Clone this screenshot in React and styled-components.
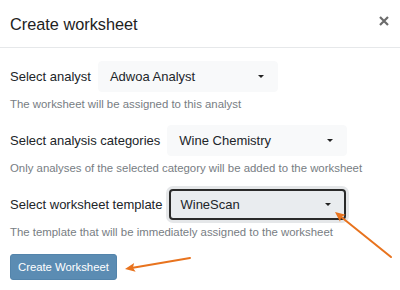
import React from 'react';
import styled, {createGlobalStyle} from 'styled-components';

const GlobalStyle = createGlobalStyle`
	html, body {
		margin: 0;
		padding: 0;
		background: #ffffff;
	}
	body {
		font-family: "Liberation Sans", Arial, Helvetica, sans-serif;
		color: #212529;
	}
`

const Modal = styled.div`
	position: relative;
	width: 400px;
	height: 290px;
	background: #ffffff;
	overflow: hidden;
`

const Header = styled.div`
	display: flex;
	align-items: center;
	justify-content: space-between;
	height: 47px;
	padding: 0 9px 0 10px;
	border-bottom: 1px solid #e6e8ea;
`

const Title = styled.h5`
	margin: 0;
	font-size: 16.3px;
	font-weight: 400;
	color: #222;
	line-height: 1;
	padding-top: 1px;
`

const CloseButton = styled.button`
	display: flex;
	align-items: center;
	justify-content: center;
	width: 14px;
	height: 14px;
	padding: 0;
	border: none;
	background: none;
	color: #6b6b6b;
	cursor: pointer;
	margin-top: -5px;
`

const Body = styled.div`
	padding: 13px 10px 0;
`

const Field = styled.div`
	margin-bottom: ${props => props.last ? '15px' : '14px'};
`

const Row = styled.div`
	display: flex;
	align-items: center;
	gap: 7px;
`

const Label = styled.label`
	font-size: 13px;
	color: #212529;
	white-space: nowrap;
`

const Select = styled.div`
	box-sizing: border-box;
	display: flex;
	align-items: center;
	justify-content: space-between;
	width: ${props => props.focused ? '177px' : '180px'};
	height: 31px;
	padding: 0 13px 0 ${props => props.focused ? '9px' : '11px'};
	border-radius: 4px;
	font-size: 13px;
	color: #212529;
	background: ${props => props.focused ? '#e9ecef' : '#f8f9fa'};
	border: ${props => props.focused ? '2px solid #2a2a2a' : '1px solid #f8f9fa'};
	box-shadow: ${props => props.focused ? '0 0 0 3px #e5e7e9' : 'none'};
	cursor: pointer;
`

const Caret = styled.span`
	width: 0;
	height: 0;
	border-left: 3.5px solid transparent;
	border-right: 3.5px solid transparent;
	border-top: 3.5px solid #222;
`

const Help = styled.div`
	margin-top: 5px;
	font-size: 11.4px;
	line-height: 14px;
	color: #777d83;
`

const SubmitButton = styled.button`
	box-sizing: border-box;
	height: 26px;
	padding: 0 7px;
	font-family: inherit;
	font-size: 11.3px;
	color: #ffffff;
	background: #5b8cb3;
	border: 1px solid #5384ab;
	border-radius: 3px;
	cursor: pointer;
`

const Annotations = styled.svg`
	position: absolute;
	left: 0;
	top: 0;
	pointer-events: none;
`

const fields = [
	{label: 'Select analyst', value: 'Adwoa Analyst', help: 'The worksheet will be assigned to this analyst'},
	{label: 'Select analysis categories', value: 'Wine Chemistry', help: 'Only analyses of the selected category will be added to the worksheet'},
	{label: 'Select worksheet template', value: 'WineScan', help: 'The template that will be immediately assigned to the worksheet', focused: true},
];

const Arrow = ({x1, y1, x2, y2}) => {
    const angle = Math.atan2(y2 - y1, x2 - x1);
    const len = 11;
    const spread = 0.42;
    const p1 = [x2 - len * Math.cos(angle - spread), y2 - len * Math.sin(angle - spread)];
    const p2 = [x2 - len * Math.cos(angle + spread), y2 - len * Math.sin(angle + spread)];
    const bx = x2 - 8 * Math.cos(angle);
    const by = y2 - 8 * Math.sin(angle);
    return (
        <g>
            <line x1={x1} y1={y1} x2={bx} y2={by} stroke="#e8731e" strokeWidth="2" strokeLinecap="round"/>
            <polygon points={`${x2},${y2} ${p1[0]},${p1[1]} ${bx},${by} ${p2[0]},${p2[1]}`} fill="#e8731e"/>
        </g>
    );
};

export default function App() {
    return (
        <Modal>
            <GlobalStyle/>
            <Header>
                <Title>Create worksheet</Title>
                <CloseButton aria-label="Close">
                    <svg width="10" height="10" viewBox="0 0 10 10">
                        <path d="M1 1 L9 9 M9 1 L1 9" stroke="currentColor" strokeWidth="2.2" strokeLinecap="butt"/>
                    </svg>
                </CloseButton>
            </Header>
            <Body>
                {fields.map((f, i) => (
                    <Field key={f.label} last={i === fields.length - 1}>
                        <Row>
                            <Label>{f.label}</Label>
                            <Select focused={f.focused}>
                                <span>{f.value}</span>
                                <Caret/>
                            </Select>
                        </Row>
                        <Help>{f.help}</Help>
                    </Field>
                ))}
                <SubmitButton>Create Worksheet</SubmitButton>
            </Body>
            <Annotations width="400" height="290">
                <Arrow x1={391} y1={257} x2={335} y2={212}/>
                <Arrow x1={190} y1={258} x2={125} y2={269}/>
            </Annotations>
        </Modal>
    );
}
